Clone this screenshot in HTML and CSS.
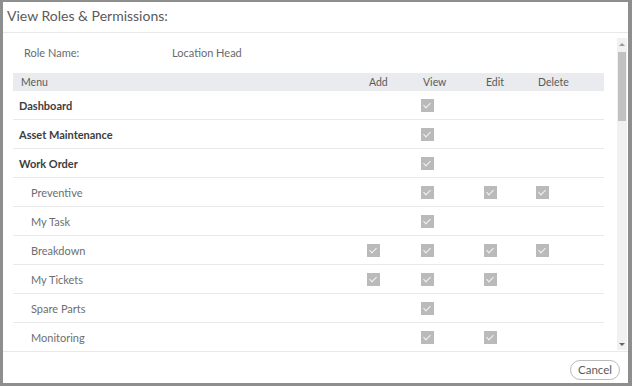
FILE: index.html
```html
<!DOCTYPE html>
<html>
<head>
<meta charset="utf-8">
<link rel="stylesheet" href="styles.css">
</head>
<body>
<div class="frame">
  <div class="modal-header">View Roles &amp; Permissions:</div>
  <div class="modal-body">
    <div class="content">
      <div class="role-row">
        <span class="role-label">Role Name:</span>
        <span class="role-value">Location Head</span>
      </div>
      <div class="perm-table">
        <div class="thead">
          <div class="cell menu">Menu</div>
          <div class="cell">Add</div>
          <div class="cell">View</div>
          <div class="cell">Edit</div>
          <div class="cell">Delete</div>
        </div>
        <div class="trow parent">
          <div class="cell menu">Dashboard</div>
          <div class="cell"></div>
          <div class="cell"><span class="cb"></span></div>
          <div class="cell"></div>
          <div class="cell"></div>
        </div>
        <div class="trow parent">
          <div class="cell menu">Asset Maintenance</div>
          <div class="cell"></div>
          <div class="cell"><span class="cb"></span></div>
          <div class="cell"></div>
          <div class="cell"></div>
        </div>
        <div class="trow parent">
          <div class="cell menu">Work Order</div>
          <div class="cell"></div>
          <div class="cell"><span class="cb"></span></div>
          <div class="cell"></div>
          <div class="cell"></div>
        </div>
        <div class="trow child">
          <div class="cell menu">Preventive</div>
          <div class="cell"></div>
          <div class="cell"><span class="cb"></span></div>
          <div class="cell"><span class="cb"></span></div>
          <div class="cell"><span class="cb"></span></div>
        </div>
        <div class="trow child">
          <div class="cell menu">My Task</div>
          <div class="cell"></div>
          <div class="cell"><span class="cb"></span></div>
          <div class="cell"></div>
          <div class="cell"></div>
        </div>
        <div class="trow child">
          <div class="cell menu">Breakdown</div>
          <div class="cell"><span class="cb"></span></div>
          <div class="cell"><span class="cb"></span></div>
          <div class="cell"><span class="cb"></span></div>
          <div class="cell"><span class="cb"></span></div>
        </div>
        <div class="trow child">
          <div class="cell menu">My Tickets</div>
          <div class="cell"><span class="cb"></span></div>
          <div class="cell"><span class="cb"></span></div>
          <div class="cell"><span class="cb"></span></div>
          <div class="cell"></div>
        </div>
        <div class="trow child">
          <div class="cell menu">Spare Parts</div>
          <div class="cell"></div>
          <div class="cell"><span class="cb"></span></div>
          <div class="cell"></div>
          <div class="cell"></div>
        </div>
        <div class="trow child">
          <div class="cell menu">Monitoring</div>
          <div class="cell"></div>
          <div class="cell"><span class="cb"></span></div>
          <div class="cell"><span class="cb"></span></div>
          <div class="cell"></div>
        </div>
      </div>
    </div>
    <div class="scrollbar" aria-hidden="true">
      <div class="sb-btn"><span class="arrow up"></span></div>
      <div class="sb-track"><div class="sb-thumb"></div></div>
      <div class="sb-btn"><span class="arrow down"></span></div>
    </div>
  </div>
  <div class="modal-footer">
    <button class="btn-cancel">Cancel</button>
  </div>
</div>
</body>
</html>
```
FILE: styles.css
```css
* { box-sizing: border-box; }
html, body { margin: 0; padding: 0; }
body {
  width: 632px;
  height: 386px;
  overflow: hidden;
  background: #fff;
  font-family: Lato, "Open Sans", sans-serif;
  color: #555;
}
.frame {
  width: 632px;
  height: 386px;
  border-style: solid;
  border-color: #8e8e8e;
  border-width: 2px 4px 3px 3px;
  display: flex;
  flex-direction: column;
  background: #fff;
}
.modal-header {
  height: 31px;
  flex: none;
  padding-left: 4px;
  font-size: 14px;
  line-height: 27px;
  color: #5a5a5a;
  border-bottom: 1px solid #e8e8e8;
}
.modal-body {
  height: 318px;
  flex: none;
  padding: 5px 0 1px 0;
  display: flex;
}
.content {
  flex: 1;
  overflow: hidden;
  padding: 0 12px 0 10px;
}
.role-row {
  height: 28px;
  margin-bottom: 7px;
  display: flex;
  align-items: center;
  padding-left: 11px;
  font-size: 11px;
  color: #6a6a6a;
}
.role-label { width: 148px; }
.perm-table { width: 591px; }
.thead, .trow {
  display: grid;
  grid-template-columns: 347px 54px 63px 52px 75px;
}
.thead {
  height: 18px;
  background: #e9ebee;
  font-size: 10.5px;
  color: #5a5a5a;
  align-items: center;
}
.thead .cell { padding-left: 9px; }
.thead .cell.menu { padding-left: 8px; }
.trow {
  height: 29px;
  border-bottom: 1px solid #e9e9e9;
  align-items: center;
  font-size: 11px;
}
.trow .cell { padding-left: 7px; display: flex; align-items: center; }
.trow.parent .cell.menu { padding-left: 6px; font-weight: 700; color: #3d3d3d; }
.trow.child .cell.menu { padding-left: 18px; color: #6e6e6e; }
.cb {
  width: 13px;
  height: 13px;
  background: #bababa;
  position: relative;
  display: inline-block;
}
.cb::after {
  content: "";
  position: absolute;
  left: 4px;
  top: 2px;
  width: 3px;
  height: 6px;
  border: solid #f4f4f4;
  border-width: 0 1.2px 1.2px 0;
  transform: rotate(45deg);
}
.scrollbar {
  width: 10px;
  margin-right: 1px;
  background: #f1f1f1;
  display: flex;
  flex-direction: column;
}
.sb-btn {
  height: 12px;
  flex: none;
  display: flex;
  align-items: center;
  justify-content: center;
}
.arrow {
  width: 0;
  height: 0;
  border-left: 3px solid transparent;
  border-right: 3px solid transparent;
}
.arrow.up { border-bottom: 3px solid #999; }
.arrow.down { border-top: 3px solid #666; }
.sb-track { flex: 1; padding: 2px 1px 0 1px; }
.sb-thumb { height: 69px; background: #c1c1c1; }
.modal-footer {
  flex: 1;
  border-top: 1px solid #e8e8e8;
  display: flex;
  justify-content: flex-end;
  align-items: flex-start;
  padding: 8px 8px 0 0;
}
.btn-cancel {
  height: 20px;
  width: 50px;
  padding: 0;
  border: 1px solid #bcbcbc;
  border-radius: 10px;
  background: #fff;
  color: #5a5a5a;
  font-family: inherit;
  font-size: 11.5px;
  line-height: 18px;
}
```
